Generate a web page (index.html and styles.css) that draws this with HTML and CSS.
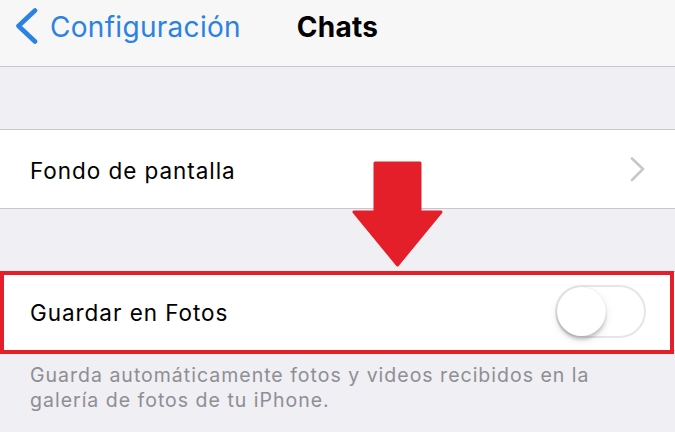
FILE: index.html
```html
<!DOCTYPE html>
<html lang="es">
<head>
<meta charset="utf-8">
<title>Chats</title>
<link rel="stylesheet" href="styles.css">
</head>
<body>
<div class="screen">
  <header class="navbar">
    <a class="back" href="#">
      <svg class="back-icon" width="24" height="38" viewBox="0 0 24 38">
        <polyline points="20,2.5 3.5,18 20,33.5" />
      </svg>
      <span class="back-label">Configuración</span>
    </a>
    <h1 class="title">Chats</h1>
  </header>

  <section class="group">
    <div class="cell">
      <span class="cell-label">Fondo de pantalla</span>
      <svg class="disclosure" width="16" height="25" viewBox="0 0 16 25">
        <polyline points="2,1.5 13,12 2,23" />
      </svg>
    </div>
  </section>

  <section class="group">
    <div class="cell highlighted">
      <span class="cell-label">Guardar en Fotos</span>
      <span class="switch"><span class="knob"></span></span>
    </div>
    <p class="footer">Guarda automáticamente fotos y videos recibidos en la galería de fotos de tu iPhone.</p>
  </section>

  <svg class="pointer" width="92" height="108" viewBox="0 0 92 108">
    <polygon points="23,2 68,2 68,51 89,51 45.5,104 2,51 23,51" />
  </svg>
</div>
</body>
</html>
```

FILE: styles.css
```css
* {
  box-sizing: border-box;
  margin: 0;
  padding: 0;
}

html, body {
  width: 675px;
  height: 432px;
  overflow: hidden;
}

body {
  background: #efeff4;
  font-family: Inter, "Liberation Sans", sans-serif;
  color: #000;
}

.screen {
  position: relative;
  height: 432px;
}

/* navigation bar */
.navbar {
  position: relative;
  height: 67px;
  background: #f7f7f7;
  border-bottom: 1px solid #c8c7cc;
  display: flex;
  align-items: flex-start;
  justify-content: center;
  padding-top: 8px;
}

.back {
  position: absolute;
  left: 15px;
  top: 8px;
  display: flex;
  align-items: center;
  gap: 11px;
  color: #2b82e3;
  text-decoration: none;
}

.back-icon polyline {
  fill: none;
  stroke: #2b82e3;
  stroke-width: 4.6;
  stroke-linecap: round;
  stroke-linejoin: round;
}

.back-label {
  font-size: 28px;
  line-height: 38px;
  letter-spacing: 0.3px;
}

.title {
  font-size: 28px;
  line-height: 38px;
  font-weight: 700;
  letter-spacing: 0.3px;
}

/* table groups */
.group {
  margin-top: 62px;
}

.cell {
  position: relative;
  height: 80px;
  background: #fff;
  border-top: 1px solid #c8c7cc;
  border-bottom: 1px solid #c8c7cc;
  display: flex;
  align-items: center;
  justify-content: space-between;
  padding: 0 29px 0 30px;
}

.cell-label {
  font-size: 22.5px;
  letter-spacing: 0.95px;
  padding-top: 2px;
}

.disclosure polyline {
  fill: none;
  stroke: #c7c7cc;
  stroke-width: 2.6;
  stroke-linecap: round;
  stroke-linejoin: round;
}

/* red outline drawn around the row */
.highlighted::after {
  content: "";
  position: absolute;
  left: 0;
  right: 1px;
  top: -1px;
  bottom: -4px;
  border: 4.5px solid #e41f2a;
  pointer-events: none;
}

.switch {
  position: relative;
  width: 91px;
  height: 53px;
  border-radius: 27px;
  background: #fff;
  border: 2.5px solid #e6e6e9;
}

.knob {
  position: absolute;
  left: 0;
  top: 0;
  width: 49px;
  height: 49px;
  border-radius: 50%;
  background: #fff;
  box-shadow: 0 4px 3px rgba(0, 0, 0, 0.14), 0 0 1px rgba(0, 0, 0, 0.18), 0 4px 10px rgba(0, 0, 0, 0.1);
}

.footer {
  padding: 12px 0 0 30px;
  width: 640px;
  font-size: 19.5px;
  line-height: 25px;
  color: #8e8e93;
  letter-spacing: 1px;
}

/* annotation arrow */
.pointer {
  position: absolute;
  left: 352px;
  top: 161px;
}

.pointer polygon {
  fill: #e41f2a;
  stroke: #e41f2a;
  stroke-width: 3;
  stroke-linejoin: round;
}
```
